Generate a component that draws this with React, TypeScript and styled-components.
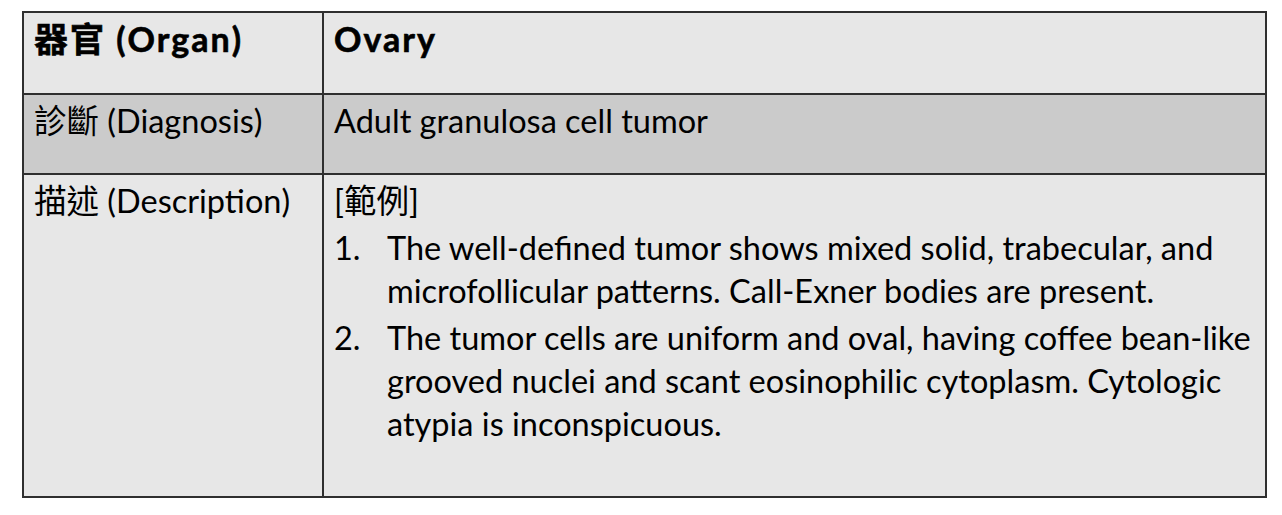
import styled, { createGlobalStyle } from "styled-components";

const GlobalStyle = createGlobalStyle`
    html, body {
        margin: 0;
        padding: 0;
        background: #ffffff;
    }
    body {
        font-family: Lato, "Noto Sans CJK TC", sans-serif;
        color: #000000;
    }
`

interface RowProps {
    shade?: "light" | "dark"
    height: number
}

const Page = styled.div`
    width: 1282px;
    height: 515px;
    padding: 11px 0 0 22px;
    box-sizing: border-box;
`

const Table = styled.div`
    width: 1245px;
    border: 2px solid #2f2f2f;
    box-sizing: border-box;
    display: flex;
    flex-direction: column;
`

const Row = styled.div<RowProps>`
    display: grid;
    grid-template-columns: 298px 1fr;
    height: ${({ height }) => height}px;
    background: ${({ shade }) => (shade === "dark" ? "#cbcbcb" : "#e7e7e7")};
    & + & {
        border-top: 2px solid #2f2f2f;
    }
`

const Cell = styled.div<{ bold?: boolean }>`
    padding: 4px 10px;
    font-size: ${({ bold }) => (bold ? "34px" : "32.5px")};
    line-height: 43px;
    font-weight: ${({ bold }) => (bold ? 700 : 400)};
    letter-spacing: ${({ bold }) => (bold ? "2px" : "0")};
    -webkit-text-stroke: ${({ bold }) => (bold ? "0.6px #000" : "0")};
    & + & {
        border-left: 2px solid #2f2f2f;
    }
`

const List = styled.ol`
    margin: 0;
    padding: 0;
    list-style: none;
    counter-reset: item;
`

const Item = styled.li`
    display: grid;
    grid-template-columns: 53px 1fr;
    margin-top: 4px;
    &::before {
        counter-increment: item;
        content: counter(item) ".";
    }
`

const data = {
    organ: { label: "器官 (Organ)", value: "Ovary" },
    diagnosis: { label: "診斷 (Diagnosis)", value: "Adult granulosa cell tumor" },
    description: {
        label: "描述 (Description)",
        title: "[範例]",
        items: [
            "The well-defined tumor shows mixed solid, trabecular, and microfollicular patterns. Call-Exner bodies are present.",
            "The tumor cells are uniform and oval, having coffee bean-like grooved nuclei and scant eosinophilic cytoplasm. Cytologic atypia is inconspicuous.",
        ],
    },
}

const App = () => {
    return (
        <Page>
            <GlobalStyle />
            <Table>
                <Row shade="light" height={80}>
                    <Cell bold>{data.organ.label}</Cell>
                    <Cell bold>{data.organ.value}</Cell>
                </Row>
                <Row shade="dark" height={78}>
                    <Cell>{data.diagnosis.label}</Cell>
                    <Cell>{data.diagnosis.value}</Cell>
                </Row>
                <Row shade="light" height={321}>
                    <Cell>{data.description.label}</Cell>
                    <Cell>
                        <div>{data.description.title}</div>
                        <List>
                            {data.description.items.map((text) => (
                                <Item key={text}>{text}</Item>
                            ))}
                        </List>
                    </Cell>
                </Row>
            </Table>
        </Page>
    )
}

export default App
